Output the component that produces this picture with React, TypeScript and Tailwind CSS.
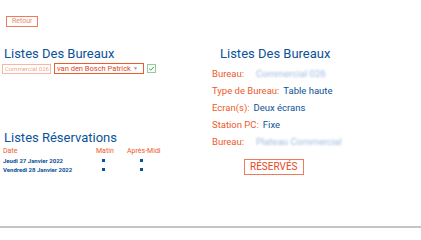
import React from "react";

const BLUE = "text-[#0b5299]";
const ORANGE = "text-[#ee5a2c]";

function InfoRow({ label, value, blur }: { label: string; value: string; blur?: boolean }) {
  return (
    <div className="flex h-[17px] items-center gap-[4px] whitespace-nowrap text-[9.5px]">
      <span className={ORANGE}>{label}</span>
      <span className={blur ? "ml-[8px] text-[#9db8e0] blur-[1px]" : BLUE}>{value}</span>
    </div>
  );
}

export default function App() {
  const reservations = ["Jeudi 27 Janvier 2022", "Vendredi 28 Janvier 2022"];

  return (
    <div
      className="flex h-[228px] w-full flex-col border-b-2 border-[#c4c4c4] bg-white"
      style={{ fontFamily: "Roboto, 'Liberation Sans', sans-serif" }}
    >
      <div className="px-[6px] pt-[6px]">
        <button className="h-[11px] border border-[#f07a5a] px-[5px] text-[7px] leading-[9px] text-[#f0866a]">
          Retour
        </button>
      </div>

      <div className="mt-[16px] flex">
        {/* left column */}
        <div className="flex w-[210px] flex-col">
          <h2 className={`pl-[4px] text-[13px] leading-[16px] ${BLUE}`}>Listes Des Bureaux</h2>
          <div className="mt-[1px] flex items-center gap-[3px] pl-[2px]">
            <div className="flex h-[10px] w-[49px] items-center overflow-hidden whitespace-nowrap border border-[#f6b7a5] px-[2px] text-[6px] text-[#f3a48c] blur-[0.6px]">
              Commercial 026
            </div>
            <div className="flex h-[11px] w-[90px] items-center justify-between whitespace-nowrap border border-[#ee5a2c] pl-[2px] pr-[5px] text-[7.5px] leading-[9px] text-[#d9491f]">
              <span>van den Bosch Patrick</span>
              <span className="text-[5px] text-[#999]">▼</span>
            </div>
            <div className="flex h-[9px] w-[9px] items-center justify-center border border-[#8fcf9a]">
              <svg viewBox="0 0 10 10" className="h-[7px] w-[7px]">
                <path d="M1.5 5.2 L4 7.5 L8.5 2.5" fill="none" stroke="#3aa657" strokeWidth="1.4" />
              </svg>
            </div>
          </div>

          <h2 className={`mt-[56px] pl-[4px] text-[13px] leading-[16px] ${BLUE}`}>Listes Réservations</h2>
          <div className="mt-[1px] pl-[3px]">
            <div className={`flex h-[9px] items-center whitespace-nowrap text-[7px] ${ORANGE}`}>
              <span className="w-[93px]">Date</span>
              <span className="w-[31px]">Matin</span>
              <span>Après-Midi</span>
            </div>
            {reservations.map((d) => (
              <div key={d} className={`flex h-[9px] items-center whitespace-nowrap text-[6px] font-bold ${BLUE}`}>
                <span className="w-[99px]">{d}</span>
                <span className="h-[3px] w-[3px] bg-[#0b5299]" />
                <span className="ml-[35px] h-[3px] w-[3px] bg-[#0b5299]" />
              </div>
            ))}
          </div>
        </div>

        {/* right column */}
        <div className="flex flex-col pl-[2px]">
          <h2 className={`pl-[8px] text-[13px] leading-[16px] ${BLUE}`}>Listes Des Bureaux</h2>
          <div className="mt-[4px] flex flex-col">
            <InfoRow label="Bureau:" value="Commercial 026" blur />
            <InfoRow label="Type de Bureau:" value="Table haute" />
            <InfoRow label="Ecran(s):" value="Deux écrans" />
            <InfoRow label="Station PC:" value="Fixe" />
            <InfoRow label="Bureau:" value="Plateau Commercial" blur />
          </div>
          <div className="mt-[2px] pl-[32px]">
            <button className="h-[16px] border border-[#f07a5a] px-[5px] text-[10px] leading-[14px] text-[#e8461c]">
              RÉSERVÉS
            </button>
          </div>
        </div>
      </div>
    </div>
  );
}
